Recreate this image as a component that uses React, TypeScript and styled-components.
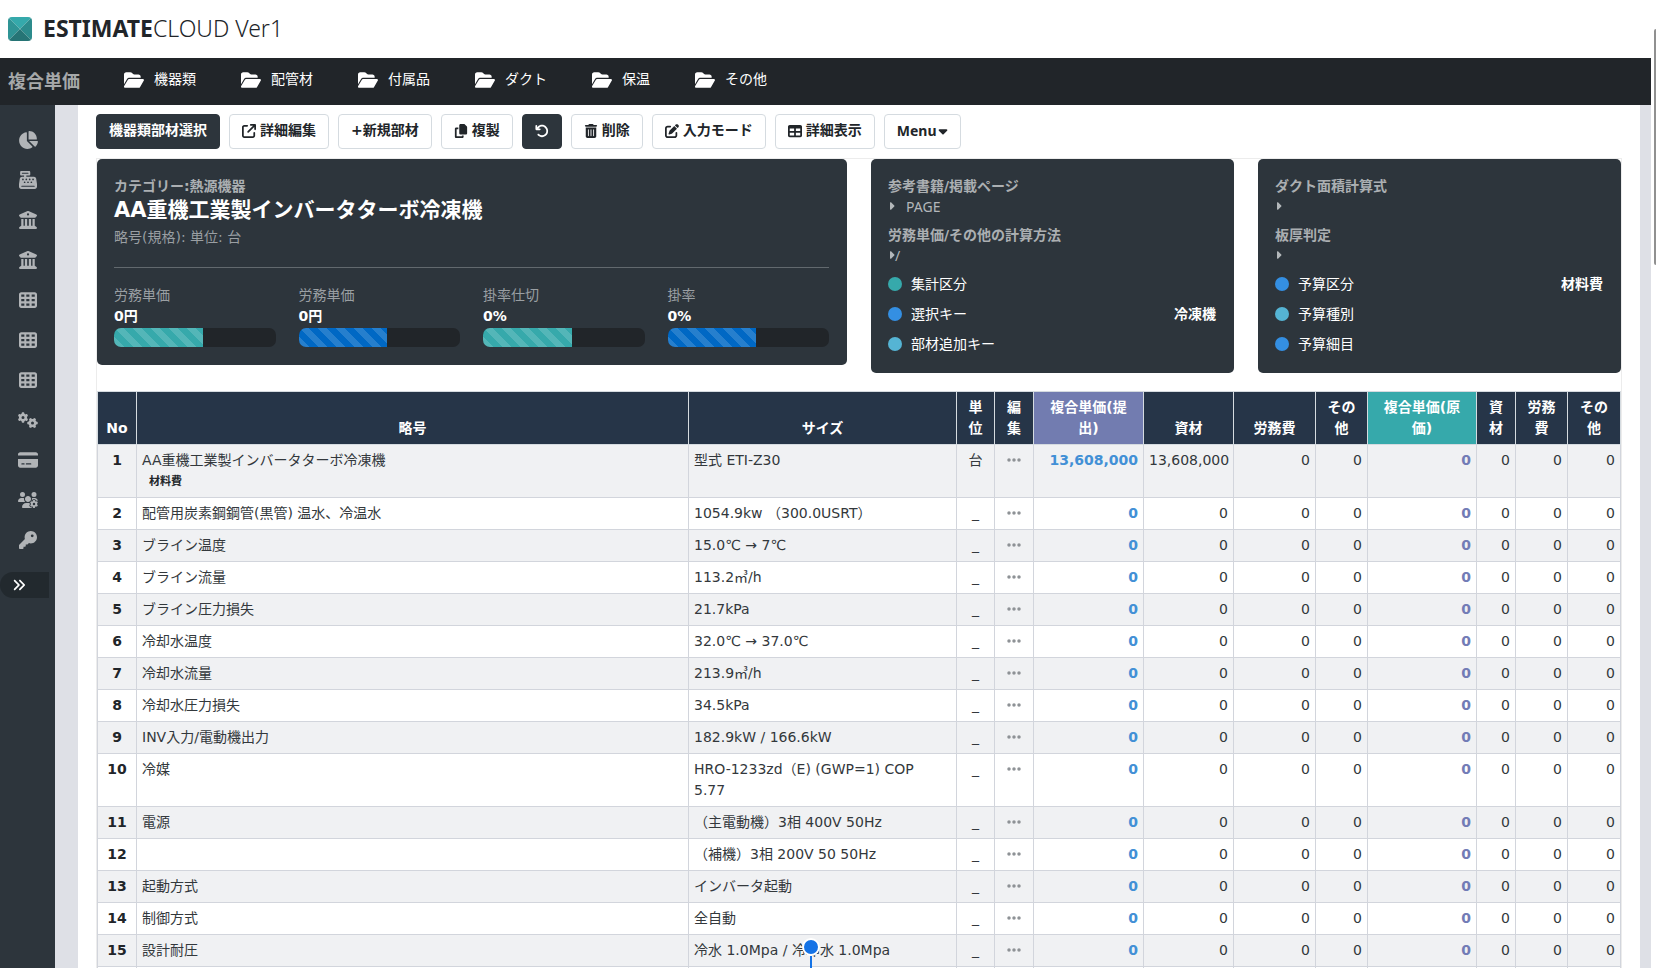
import React from "react";
import styled, { createGlobalStyle } from "styled-components";
import {
  FaAnglesRight, FaArrowRotateLeft, FaArrowUpRightFromSquare, FaBuildingColumns, FaCaretDown,
  FaCaretRight, FaCashRegister, FaChartPie, FaCopy, FaCreditCard, FaEllipsis, FaFolderOpen,
  FaGears, FaKey, FaPenToSquare, FaTable, FaTableCells, FaTrashCan, FaUsersGear,
} from "react-icons/fa6";

const GlobalStyle = createGlobalStyle`
  *, *::before, *::after { box-sizing: border-box; }
  body {
    margin: 0;
    overflow: hidden;
    background: #fff;
    color: #212529;
    font-family: "DejaVu Sans", "Noto Sans CJK JP", sans-serif;
    font-size: 14px;
    line-height: 21px;
  }
  h1, h2, h3, p, ul, dl, dd { margin: 0; padding: 0; }
  a { color: inherit; text-decoration: none; }
  button { font: inherit; color: inherit; cursor: pointer; }
`;

const Page = styled.div`
  position: relative;
  display: flex;
  flex-direction: column;
  height: 100vh;
  padding-right: 5px;
  overflow: hidden;
`;

const ScrollThumb = styled.div`
  position: absolute;
  top: 29px;
  right: 0;
  width: 2px;
  height: 236px;
  border-radius: 2px 0 0 2px;
  background: #909090;
`;

const TopBar = styled.header`
  display: flex;
  flex: none;
  align-items: center;
  gap: 11px;
  height: 58px;
  padding: 0 8px;
`;

const Brand = styled.h1`
  padding-bottom: 3px;
  font-family: "Noto Sans", "Noto Sans CJK JP", sans-serif;
  font-size: 23px;
  font-weight: 300;
  line-height: 32px;
  b { font-weight: 700; }
`;

const NavBar = styled.nav`
  display: flex;
  flex: none;
  align-items: center;
  height: 47px;
  padding: 0 8px;
  background: #212529;
  color: #fff;
`;

const NavTitle = styled.h2`
  width: 116px;
  color: #a6a8a9;
  font-size: 18px;
  line-height: 24px;
`;

const NavList = styled.ul`
  display: flex;
  gap: 45px;
  list-style: none;
  padding-bottom: 4px;
`;

const NavLink = styled.a`
  display: flex;
  align-items: center;
  gap: 10px;
  svg { width: 20px; height: 18px; }
`;

const Body = styled.div`
  display: flex;
  flex: 1;
  min-height: 0;
  background: #dee0e6;
`;

const SideBar = styled.aside`
  display: flex;
  flex: none;
  flex-direction: column;
  width: 55px;
  padding-top: 15px;
  background: #2d353c;
`;

const SideLink = styled.a`
  display: flex;
  align-items: center;
  justify-content: center;
  height: 40px;
  color: #b1b4b7;
  svg { width: 20px; height: 18px; }
`;

const SideToggle = styled.button`
  display: flex;
  align-items: center;
  width: 49px;
  height: 26px;
  margin-top: 12px;
  padding: 0 0 0 12px;
  border: 0;
  border-radius: 13px 0 0 13px;
  background: #22292e;
  color: #fff;
  svg { width: 14px; height: 16px; }
`;

const Main = styled.main`
  flex: 1;
  min-width: 0;
  margin: 0 11px 0 23px;
  padding: 9px 18px 0;
  overflow: hidden;
  background: #fff;
`;

const ToolBar = styled.div`
  display: flex;
  gap: 9px;
  margin-bottom: 9px;
`;

const ToolButton = styled.button<{ $dark?: boolean; $menu?: boolean }>`
  display: flex;
  align-items: center;
  gap: ${(p) => (p.$menu ? 1 : 4)}px;
  height: 35px;
  padding: 0 12px 2px;
  border: 1px solid ${(p) => (p.$dark ? "#2d353c" : "#d5dbe0")};
  border-radius: 4px;
  background: ${(p) => (p.$dark ? "#2d353c" : "#fff")};
  color: ${(p) => (p.$dark ? "#fff" : "#212529")};
  font-family: ${(p) => (p.$menu ? '"Noto Sans", sans-serif' : "inherit")};
  font-weight: 700;
  svg { height: 14px; width: ${(p) => (p.$menu ? "10px" : "auto")}; }
`;

const Panel = styled.section`
  border: 1px solid #ececec;
  border-bottom: 0;
`;

const Cards = styled.div`
  display: grid;
  grid-template-columns: 750fr 363fr 363fr;
  gap: 24px;
  align-items: start;
  margin-bottom: 18px;
`;

const Card = styled.article`
  padding: 17px 18px 14px 17px;
  border-radius: 5px;
  background: #2d353c;
  color: #fff;
`;

const CardLabel = styled.h3`
  color: #abafb2;
  font-size: 14px;
  line-height: 21px;
`;

const ProductName = styled.h2`
  font-size: 21px;
  line-height: 26px;
`;

const Muted = styled.p`
  color: #9a9fa3;
`;

const Summary = styled.div`
  padding-bottom: 19px;
  border-bottom: 1px solid #62696e;
  ${Muted} { margin-top: 4px; }
`;

const Gauges = styled.div`
  display: grid;
  grid-template-columns: repeat(4, 1fr);
  gap: 23px;
  padding: 17px 0 4px;
`;

const GaugeValue = styled.p`
  font-weight: 700;
`;

const Track = styled.div`
  height: 19px;
  margin-top: 1px;
  overflow: hidden;
  border-radius: 7px;
  background: #212529;
`;

const Fill = styled.div<{ $color: string }>`
  width: 55%;
  height: 100%;
  background-color: ${(p) => p.$color};
  background-image: linear-gradient(45deg, rgba(255, 255, 255, 0.15) 25%, transparent 25%, transparent 50%,
    rgba(255, 255, 255, 0.15) 50%, rgba(255, 255, 255, 0.15) 75%, transparent 75%, transparent);
  background-size: 18px 18px;
`;

const Reference = styled.p<{ $gap?: boolean }>`
  display: flex;
  align-items: center;
  gap: ${(p) => (p.$gap ? 11 : 0)}px;
  height: 20px;
  margin-bottom: 8px;
  padding-bottom: 2px;
  color: #b3b7ba;
  font-family: "Noto Sans", sans-serif;
  svg { width: 7px; height: 12px; }
`;

const KeyList = styled.dl`
  margin-top: -5px;
`;

const KeyRow = styled.div`
  display: flex;
  align-items: center;
  gap: 9px;
  height: 30px;
`;

const Dot = styled.span<{ $color: string }>`
  width: 14px;
  height: 14px;
  border-radius: 50%;
  background: ${(p) => p.$color};
`;

const KeyValue = styled.dd`
  margin-left: auto;
  font-weight: 700;
`;

const Table = styled.table`
  width: 100%;
  table-layout: fixed;
  border-collapse: collapse;
`;

const Col = styled.col<{ $w?: number }>`
  width: ${(p) => (p.$w ? `${p.$w}px` : "auto")};
`;

const Th = styled.th<{ $bg?: string }>`
  padding: 5px 8px;
  border: 1px solid #d5dbe0;
  background: ${(p) => p.$bg || "#263548"};
  color: #fff;
  text-align: center;
  vertical-align: bottom;
`;

const Row = styled.tr`
  &:nth-child(odd) { background: #f0f1f3; }
`;

const Td = styled.td<{ $align?: string; $color?: string }>`
  height: 32px;
  padding: 5px;
  border: 1px solid #d2d5dc;
  color: ${(p) => p.$color || "#33383c"};
  font-weight: ${(p) => (p.$color ? 700 : 400)};
  text-align: ${(p) => p.$align || "left"};
  vertical-align: top;
`;

const SizeCell = styled(Td)`
  padding-right: 16px;
`;

const RowHead = styled(Th)`
  padding: 5px;
  background: transparent;
  border-color: #d2d5dc;
  color: #212529;
  vertical-align: top;
`;

const Tag = styled.div`
  padding-left: 7px;
  color: #212529;
  font-size: 11px;
  font-weight: 700;
  line-height: 21px;
`;

const MoreButton = styled.button`
  display: block;
  margin: 0 auto;
  padding: 0;
  border: 0;
  background: none;
  color: #8e9296;
  line-height: 20px;
  svg { display: block; width: 14px; height: 20px; }
`;

const Marker = styled.div`
  position: absolute;
  bottom: 0;
  left: 49%;
  display: flex;
  flex-direction: column;
  align-items: center;
  width: 18px;
  margin-left: -9px;
  &::before {
    content: "";
    width: 18px;
    height: 18px;
    border: 2px solid #fff;
    border-radius: 50%;
    background: #1473e6;
  }
  &::after {
    content: "";
    width: 2px;
    height: 12px;
    background: #1473e6;
  }
`;

const Logo = () => (
  <svg width="24" height="24" viewBox="0 0 24 24" aria-hidden="true">
    <clipPath id="logo"><rect width="24" height="24" rx="4" /></clipPath>
    <g clipPath="url(#logo)">
      <path d="M0 0h24L12 12z" fill="#35a9ab" />
      <path d="M0 0l12 12L0 24z" fill="#2f9495" />
      <path d="M24 0L12 12l12 12z" fill="#2c8b8c" />
      <path d="M0 24l12-12 12 12z" fill="#267475" />
    </g>
  </svg>
);

const NAV = ["機器類", "配管材", "付属品", "ダクト", "保温", "その他"];

const SIDE = [
  { icon: FaChartPie, label: "集計" },
  { icon: FaCashRegister, label: "会計" },
  { icon: FaBuildingColumns, label: "建築" },
  { icon: FaBuildingColumns, label: "設備" },
  { icon: FaTableCells, label: "表1" },
  { icon: FaTableCells, label: "表2" },
  { icon: FaTableCells, label: "表3" },
  { icon: FaGears, label: "設定" },
  { icon: FaCreditCard, label: "支払" },
  { icon: FaUsersGear, label: "利用者" },
  { icon: FaKey, label: "権限" },
];

const TEAL = "#36a9ab";
const BLUE = "#348fe2";
const SKY = "#55b4d4";

const GAUGES = [
  { label: "労務単価", value: "0円", color: TEAL },
  { label: "労務単価", value: "0円", color: "#0068c4" },
  { label: "掛率仕切", value: "0%", color: TEAL },
  { label: "掛率", value: "0%", color: "#0068c4" },
];

type Key = { label: string; color: string; value?: string };

const BUDGET_KEYS: Key[] = [
  { label: "予算区分", color: BLUE, value: "材料費" },
  { label: "予算種別", color: SKY },
  { label: "予算細目", color: BLUE },
];

const PART_KEYS: Key[] = [
  { label: "集計区分", color: TEAL },
  { label: "選択キー", color: BLUE, value: "冷凍機" },
  { label: "部材追加キー", color: SKY },
];

const COLUMNS: { name: string; w?: number; bg?: string }[] = [
  { name: "No", w: 39 },
  { name: "略号" },
  { name: "サイズ", w: 268 },
  { name: "単位", w: 38 },
  { name: "編集", w: 39 },
  { name: "複合単価(提出)", w: 110, bg: "#727cb0" },
  { name: "資材", w: 90 },
  { name: "労務費", w: 82 },
  { name: "その他", w: 52 },
  { name: "複合単価(原価)", w: 109, bg: TEAL },
  { name: "資材", w: 39 },
  { name: "労務費", w: 52 },
  { name: "その他", w: 53 },
];

type Item = { name: string; size: string; unit?: string; price?: string; tag?: string };

const ITEMS: Item[] = [
  { name: "AA重機工業製インバータターボ冷凍機", size: "型式 ETI-Z30", unit: "台", price: "13,608,000", tag: "材料費" },
  { name: "配管用炭素鋼鋼管(黒管) 温水、冷温水", size: "1054.9kw （300.0USRT）" },
  { name: "ブライン温度", size: "15.0℃ → 7℃" },
  { name: "ブライン流量", size: "113.2㎥/h" },
  { name: "ブライン圧力損失", size: "21.7kPa" },
  { name: "冷却水温度", size: "32.0℃ → 37.0℃" },
  { name: "冷却水流量", size: "213.9㎥/h" },
  { name: "冷却水圧力損失", size: "34.5kPa" },
  { name: "INV入力/電動機出力", size: "182.9kW / 166.6kW" },
  { name: "冷媒", size: "HRO-1233zd（E) (GWP=1) COP 5.77" },
  { name: "電源", size: "（主電動機）3相 400V 50Hz" },
  { name: "", size: "（補機）3相 200V 50 50Hz" },
  { name: "起動方式", size: "インバータ起動" },
  { name: "制御方式", size: "全自動" },
  { name: "設計耐圧", size: "冷水 1.0Mpa / 冷却水 1.0Mpa" },
];

const Keys = ({ keys }: { keys: Key[] }) => (
  <KeyList>
    {keys.map((k) => (
      <KeyRow key={k.label}>
        <Dot $color={k.color} />
        <dt>{k.label}</dt>
        <KeyValue>{k.value}</KeyValue>
      </KeyRow>
    ))}
  </KeyList>
);

const ItemRow = ({ item, no }: { item: Item; no: number }) => (
  <Row>
    <RowHead scope="row">{no}</RowHead>
    <Td>
      {item.name}
      {item.tag && <Tag>{item.tag}</Tag>}
    </Td>
    <SizeCell>{item.size}</SizeCell>
    <Td $align="center">{item.unit || "_"}</Td>
    <Td $align="center">
      <MoreButton aria-label="編集"><FaEllipsis /></MoreButton>
    </Td>
    <Td $align="right" $color="#4290d6">{item.price || "0"}</Td>
    <Td $align="right">{item.price || "0"}</Td>
    <Td $align="right">0</Td>
    <Td $align="right">0</Td>
    <Td $align="right" $color="#727cb6">0</Td>
    <Td $align="right">0</Td>
    <Td $align="right">0</Td>
    <Td $align="right">0</Td>
  </Row>
);

export default function App() {
  return (
    <Page>
      <GlobalStyle />
      <TopBar>
        <Logo />
        <Brand><b>ESTIMATE</b>CLOUD Ver1</Brand>
      </TopBar>
      <NavBar>
        <NavTitle>複合単価</NavTitle>
        <NavList>
          {NAV.map((name) => (
            <li key={name}><NavLink href="#"><FaFolderOpen />{name}</NavLink></li>
          ))}
        </NavList>
      </NavBar>
      <Body>
        <SideBar>
          {SIDE.map(({ icon: Icon, label }) => (
            <SideLink key={label} href="#" aria-label={label}><Icon /></SideLink>
          ))}
          <SideToggle aria-label="メニューを開く"><FaAnglesRight /></SideToggle>
        </SideBar>
        <Main>
          <ToolBar>
            <ToolButton $dark>機器類部材選択</ToolButton>
            <ToolButton><FaArrowUpRightFromSquare />詳細編集</ToolButton>
            <ToolButton>+新規部材</ToolButton>
            <ToolButton><FaCopy />複製</ToolButton>
            <ToolButton $dark aria-label="元に戻す"><FaArrowRotateLeft /></ToolButton>
            <ToolButton><FaTrashCan />削除</ToolButton>
            <ToolButton><FaPenToSquare />入力モード</ToolButton>
            <ToolButton><FaTable />詳細表示</ToolButton>
            <ToolButton $menu>Menu<FaCaretDown /></ToolButton>
          </ToolBar>
          <Panel>
            <Cards>
              <Card>
                <Summary>
                  <CardLabel>カテゴリー:熱源機器</CardLabel>
                  <ProductName>AA重機工業製インバータターボ冷凍機</ProductName>
                  <Muted>略号(規格): 単位: 台</Muted>
                </Summary>
                <Gauges>
                  {GAUGES.map((g, i) => (
                    <div key={i}>
                      <Muted>{g.label}</Muted>
                      <GaugeValue>{g.value}</GaugeValue>
                      <Track><Fill $color={g.color} /></Track>
                    </div>
                  ))}
                </Gauges>
              </Card>
              <Card>
                <CardLabel>参考書籍/掲載ページ</CardLabel>
                <Reference $gap><FaCaretRight />PAGE</Reference>
                <CardLabel>労務単価/その他の計算方法</CardLabel>
                <Reference><FaCaretRight />/</Reference>
                <Keys keys={PART_KEYS} />
              </Card>
              <Card>
                <CardLabel>ダクト面積計算式</CardLabel>
                <Reference><FaCaretRight /></Reference>
                <CardLabel>板厚判定</CardLabel>
                <Reference><FaCaretRight /></Reference>
                <Keys keys={BUDGET_KEYS} />
              </Card>
            </Cards>
            <Table>
              <colgroup>
                {COLUMNS.map((c, i) => <Col key={i} $w={c.w} />)}
              </colgroup>
              <thead>
                <tr>
                  {COLUMNS.map((c, i) => <Th key={i} scope="col" $bg={c.bg}>{c.name}</Th>)}
                </tr>
              </thead>
              <tbody>
                {ITEMS.map((item, i) => <ItemRow key={i} item={item} no={i + 1} />)}
                <Row>{COLUMNS.map((_, i) => <Td key={i} />)}</Row>
              </tbody>
            </Table>
          </Panel>
        </Main>
      </Body>
      <ScrollThumb />
      <Marker />
    </Page>
  );
}
